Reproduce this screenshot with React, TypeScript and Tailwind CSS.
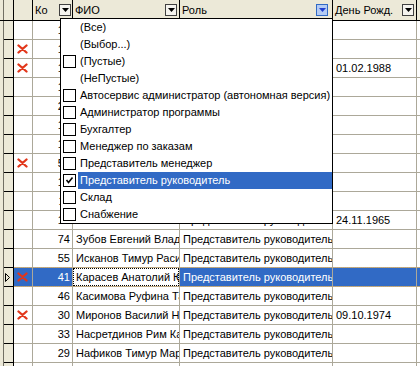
import React from "react";

type Row = {
  x?: boolean;
  ko: string;
  fio: string;
  role: string;
  date?: string;
  sel?: boolean;
};

// rows 0-9 sit behind the open filter list, so only their numbers peek out
const rows: Row[] = [
  { ko: "12", fio: "", role: "" },
  { x: true, ko: "18", fio: "", role: "" },
  { x: true, ko: "10", fio: "", role: "", date: "01.02.1988" },
  { ko: "15", fio: "", role: "" },
  { ko: "21", fio: "", role: "" },
  { ko: "16", fio: "", role: "" },
  { ko: "13", fio: "", role: "" },
  { x: true, ko: "51", fio: "", role: "" },
  { ko: "17", fio: "", role: "" },
  { ko: "11", fio: "", role: "" },
  { ko: "19", fio: "", role: "Представитель руководитель", date: "24.11.1965" },
  { ko: "74", fio: "Зубов Евгений Владимирович", role: "Представитель руководитель" },
  { ko: "55", fio: "Исканов Тимур Расилевич", role: "Представитель руководитель" },
  { x: true, ko: "41", fio: "Карасев Анатолий Юрьевич", role: "Представитель руководитель", sel: true },
  { ko: "46", fio: "Касимова Руфина Тагировна", role: "Представитель руководитель" },
  { x: true, ko: "30", fio: "Миронов Василий Николаевич", role: "Представитель руководитель", date: "09.10.1974" },
  { ko: "33", fio: "Насретдинов Рим Камилевич", role: "Представитель руководитель" },
  { ko: "29", fio: "Нафиков Тимур Маратович", role: "Представитель руководитель" },
  { ko: "", fio: "", role: "" },
];

const items: { label: string; box: boolean; checked?: boolean; active?: boolean }[] = [
  { label: "(Все)", box: false },
  { label: "(Выбор...)", box: false },
  { label: "(Пустые)", box: true },
  { label: "(НеПустые)", box: false },
  { label: "Автосервис администратор (автономная версия)", box: true },
  { label: "Администратор программы", box: true },
  { label: "Бухгалтер", box: true },
  { label: "Менеджер по заказам", box: true },
  { label: "Представитель менеджер", box: true },
  { label: "Представитель руководитель", box: true, checked: true, active: true },
  { label: "Склад", box: true },
  { label: "Снабжение", box: true },
];

const FilterBtn: React.FC<{ active?: boolean; className?: string }> = ({ active, className }) => (
  <span
    className={
      "flex h-[12px] w-[12px] shrink-0 items-center justify-center border " +
      (active ? "border-[#316AC5] bg-[#B4CBF4] " : "border-[#404040] bg-[#F4F3EE] ") +
      (className ?? "")
    }
  >
    <svg width="7" height="4" viewBox="0 0 7 4">
      <polygon points="0,0 7,0 3.5,4" fill={active ? "#1F3FD0" : "#000"} />
    </svg>
  </span>
);

const RedX = () => (
  <svg width="11" height="10" viewBox="0 0 11 10">
    <path d="M1.5 1.5 L9.5 8.5 M9.5 1.5 L1.5 8.5" stroke="#E2361A" strokeWidth="2.3" strokeLinecap="round" />
  </svg>
);

const HeaderCell: React.FC<{ w: string; label: string; btn: string; active?: boolean }> = ({
  w,
  label,
  btn,
  active,
}) => (
  <div className={w + " flex items-center border-r border-black pl-[2px] overflow-hidden"}>
    <span className="whitespace-nowrap">{label}</span>
    <FilterBtn active={active} className={"ml-auto " + btn} />
  </div>
);

export default function App() {
  return (
    <div className="relative h-[366px] w-[420px] overflow-hidden bg-white font-['Liberation_Sans',Arial,sans-serif] text-[11px] leading-[18px] text-black">
      {/* header */}
      <div className="flex h-[21px] border-b border-black bg-[#ECE9D8]">
        <div className="w-[4px] shrink-0 border-r border-[#716F64]" />
        <div className="w-[10px] shrink-0 border-r border-black" />
        <div className="w-[19px] shrink-0 border-r border-black" />
        <HeaderCell w="w-[40px]" label="Ко" btn="mr-[1px]" />
        <HeaderCell w="w-[107px]" label="ФИО" btn="mr-[2px]" />
        <HeaderCell w="w-[153px]" label="Роль" btn="mr-[4px]" active />
        <HeaderCell w="w-[84px]" label="День Рожд." btn="mr-[2px]" />
        <div className="flex-1" />
      </div>

      {/* body */}
      {rows.map((r, i) => {
        const cell = "h-full shrink-0 border-r border-b border-[#ACA899] overflow-hidden whitespace-nowrap";
        const bg = r.sel ? " bg-[#316AC5] text-white" : "";
        return (
          <div key={i} className="relative flex h-[19px]">
            <div className="h-full w-[4px] shrink-0 border-r border-[#716F64] bg-[#ECE9D8]" />
            <div className="flex h-full w-[10px] shrink-0 items-center border-r border-b border-black bg-[#ECE9D8] pl-[1px]">
              {r.sel && (
                <svg width="5" height="9" viewBox="0 0 5 9">
                  <polygon points="0.5,0.5 4.5,4.5 0.5,8.5" fill="none" stroke="#000" strokeWidth="1" />
                </svg>
              )}
            </div>
            <div className={cell + bg + " flex w-[19px] items-center pl-[3px]"}>{r.x && <RedX />}</div>
            <div className={cell + bg + " w-[40px] pr-[2px] text-right"}>{r.ko}</div>
            <div className={cell + " relative w-[107px] pl-[3px]"}>
              {r.fio}
              {r.sel && <span className="absolute inset-0 border border-dotted border-black" />}
            </div>
            <div className={cell + bg + " w-[153px] pl-[3px]"}>{r.role}</div>
            <div className={cell + bg + " w-[84px] pl-[3px]"}>{r.date}</div>
            <div className={"h-full flex-1 border-b border-[#ACA899]" + bg} />
            {r.sel && (
              <span className="pointer-events-none absolute -top-px bottom-0 left-[14px] right-0 border-y border-dotted border-[#C9A46A]" />
            )}
          </div>
        );
      })}

      {/* filter dropdown */}
      <div className="absolute left-[60px] top-[18px] w-[273px] border border-black bg-white">
        {items.map((it) => (
          <div key={it.label} className="flex h-[17px] items-center">
            <div className="flex w-[17px] shrink-0 items-center pl-[2px]">
              {it.box && (
                <span className="flex h-[13px] w-[13px] items-center justify-center border border-black bg-white">
                  {it.checked && (
                    <svg width="9" height="9" viewBox="0 0 9 9">
                      <polyline points="1.5,4 3.5,6.5 7.5,1.5" fill="none" stroke="#000" strokeWidth="1.6" />
                    </svg>
                  )}
                </span>
              )}
            </div>
            <span
              className={
                "h-full flex-1 whitespace-nowrap pl-[2px] leading-[17px] " +
                (it.active ? "bg-[#316AC5] text-white" : "")
              }
            >
              {it.label}
            </span>
          </div>
        ))}
      </div>
    </div>
  );
}
